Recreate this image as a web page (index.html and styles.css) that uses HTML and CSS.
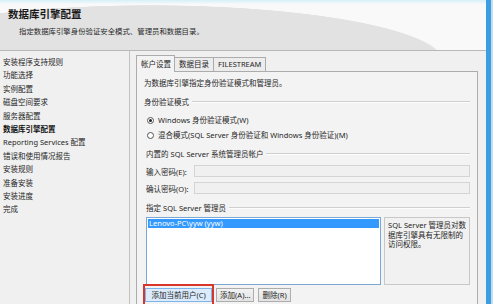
FILE: index.html
```html
<!DOCTYPE html>
<html lang="zh-CN">
<head>
<meta charset="utf-8">
<title>数据库引擎配置</title>
<link rel="stylesheet" href="styles.css">
</head>
<body>
<div class="window">
  <div class="main">
    <header class="header">
      <h1 class="title">数据库引擎配置</h1>
      <p class="subtitle">指定数据库引擎身份验证安全模式、管理员和数据目录。</p>
    </header>
    <div class="content">
      <nav class="nav">
        <div class="nav-item">安装程序支持规则</div>
        <div class="nav-item">功能选择</div>
        <div class="nav-item">实例配置</div>
        <div class="nav-item">磁盘空间要求</div>
        <div class="nav-item">服务器配置</div>
        <div class="nav-item active">数据库引擎配置</div>
        <div class="nav-item">Reporting Services 配置</div>
        <div class="nav-item">错误和使用情况报告</div>
        <div class="nav-item">安装规则</div>
        <div class="nav-item">准备安装</div>
        <div class="nav-item">安装进度</div>
        <div class="nav-item">完成</div>
      </nav>
      <section class="pane">
        <div class="tabs">
          <div class="tab selected">帐户设置</div>
          <div class="tab">数据目录</div>
          <div class="tab">FILESTREAM</div>
        </div>
        <div class="panel">
          <div class="intro">为数据库引擎指定身份验证模式和管理员。</div>
          <div class="group g1"><span>身份验证模式</span><i class="rule"></i></div>
          <label class="radio-row r1"><span class="radio checked"></span>Windows 身份验证模式(W)</label>
          <label class="radio-row r2"><span class="radio"></span>混合模式(SQL Server 身份验证和 Windows 身份验证)(M)</label>
          <div class="group g2"><span>内置的 SQL Server 系统管理员帐户</span><i class="rule"></i></div>
          <div class="field f1"><span class="field-label">输入密码(E):</span><span class="input"></span></div>
          <div class="field f2"><span class="field-label">确认密码(O):</span><span class="input"></span></div>
          <div class="group g3"><span>指定 SQL Server 管理员</span><i class="rule"></i></div>
          <div class="admins">
            <div class="listbox">
              <div class="list-row selected">Lenovo-PC\yyw (yyw)</div>
            </div>
            <div class="desc">SQL Server 管理员对数<br>据库引擎具有无限制的<br>访问权限。</div>
          </div>
          <div class="buttons">
            <button class="btn current">添加当前用户(C)<span class="highlight"></span></button>
            <button class="btn add">添加(A)...</button>
            <button class="btn del">删除(R)</button>
          </div>
        </div>
      </section>
    </div>
  </div>
  <div class="edge"></div>
</div>
</body>
</html>
```

FILE: styles.css
```css
* { box-sizing: border-box; }
html, body { margin: 0; padding: 0; }
body {
  width: 493px;
  height: 304px;
  overflow: hidden;
  background: #f0f0f0;
  color: #1f1f1f;
  font-family: "Noto Sans", "Noto Sans CJK SC", sans-serif;
  font-size: 7.5px;
}
.window { display: flex; height: 304px; }
.main { flex: 1; display: flex; flex-direction: column; min-width: 0; }
.edge {
  width: 7px;
  background: linear-gradient(to right, #3b9ee2 0, #3b9ee2 5px, #c9dcea 5px);
}

.header {
  height: 51px;
  border-bottom: 1px solid #b8b8b8;
  background:
    linear-gradient(to bottom, #d6f0fa 0, #eef6fa 3px, rgba(255,255,255,0) 4px),
    radial-gradient(ellipse 295px 57px at 150px 62px, #e2e2e2 99%, #f9f9f9 100%);
  padding: 8px 0 0 8px;
}
.title {
  margin: 0;
  font-size: 10.5px;
  font-weight: bold;
  line-height: 12px;
  color: #1a1a1a;
}
.subtitle {
  margin: 6px 0 0 11px;
  font-size: 7.4px;
  line-height: 10px;
  color: #2a2a2a;
}

.content { flex: 1; display: flex; min-height: 0; }
.nav {
  width: 131px;
  border-right: 1px solid #c2c2c2;
  padding: 5px 0 0 3px;
}
.nav-item { height: 13.4px; line-height: 13.4px; white-space: nowrap; color: #262626; }
.nav-item.active { font-weight: bold; color: #111; }

.pane { flex: 1; padding: 4px 8px 0 6px; display: flex; flex-direction: column; }
.tabs { display: flex; align-items: flex-end; height: 16px; }
.tab {
  height: 14px;
  line-height: 13px;
  padding: 0 4px;
  border: 1px solid #acacac;
  border-bottom: none;
  border-left: none;
  background: #ececec;
  white-space: nowrap;
}
.tab.selected {
  height: 17px;
  line-height: 16px;
  width: 39px;
  border-left: 1px solid #acacac;
  background: #f3f3f3;
  margin-bottom: -1px;
  position: relative;
  z-index: 1;
}
.panel {
  flex: 1;
  border: 1px solid #acacac;
  border-bottom: none;
  background: #f3f3f3;
  padding: 6px 7px 0 8px;
  display: flex;
  flex-direction: column;
}
.intro { height: 10px; line-height: 10px; margin-left: -1px; }
.group { display: flex; align-items: center; height: 10px; line-height: 10px; }
.group span { white-space: nowrap; margin-right: 3px; }
.rule { flex: 1; height: 2px; border-top: 1px solid #cfcfcf; border-bottom: 1px solid #fdfdfd; }
.g1 { margin-top: 9px; margin-left: -1px; }
.g2 { margin-top: 9px; margin-left: 1px; }
.g3 { margin-top: 9px; margin-left: 1px; }

.radio-row { display: flex; align-items: center; height: 10px; line-height: 10px; padding-left: 2px; }
.r1 { margin-top: 8px; }
.r2 { margin-top: 5px; }
.radio {
  width: 7px; height: 7px;
  border: 1px solid #555;
  border-radius: 50%;
  background: #fff;
  margin-right: 4px;
  display: flex;
  align-items: center;
  justify-content: center;
}
.radio.checked::after {
  content: "";
  width: 3px; height: 3px;
  border-radius: 50%;
  background: #222;
}

.field { display: flex; align-items: center; height: 12px; padding-left: 1px; }
.f1 { margin-top: 6px; }
.f2 { margin-top: 5px; }
.field-label { width: 48px; white-space: nowrap; }
.input { flex: 1; height: 12px; border: 1px solid #d4d4d4; background: #f0f0f0; }

.admins { display: flex; gap: 3px; margin-top: 4px; height: 68px; padding-left: 1px; }
.listbox {
  width: 235px;
  border: 1px solid #7aa7d4;
  background: #fff;
  padding: 1px;
}
.list-row { height: 9px; line-height: 9px; padding-left: 1px; }
.list-row.selected { background: #3399ff; color: #fff; }
.desc {
  flex: 1;
  border: 1px solid #c8c8c8;
  background: #f1f1f1;
  padding: 3px 3px;
  line-height: 9.6px;
  white-space: nowrap;
}

.buttons { display: flex; gap: 4px; margin-top: 3px; }
.btn {
  height: 14px;
  padding: 0 3px;
  font: inherit;
  line-height: 12px;
  color: #1f1f1f;
  border: 1px solid #adadad;
  background: linear-gradient(#f2f2f2, #e3e3e3);
  white-space: nowrap;
}
.btn.current { position: relative; width: 67px; background: #dcecfc; border-color: #7eb4ea; }
.btn.add { width: 38px; }
.btn.del { width: 33px; }
.highlight {
  position: absolute;
  left: -3px; right: -3px; top: -5px; bottom: -8px;
  border: 2px solid #d8352b;
}
```
